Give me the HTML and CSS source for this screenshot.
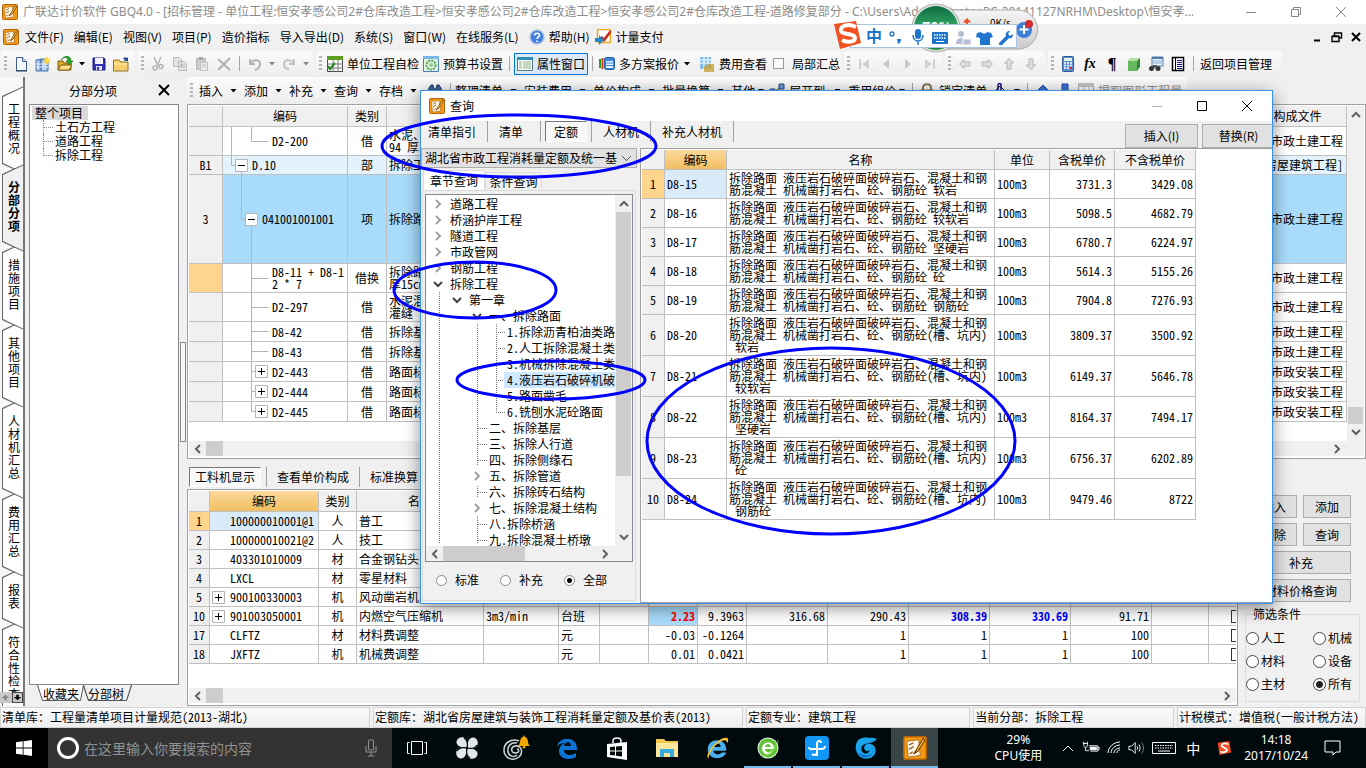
FILE: index.html
```html
<!DOCTYPE html>
<html lang="zh-CN">
<head>
<meta charset="utf-8">
<title>广联达计价软件 GBQ4.0</title>
<link rel="stylesheet" href="styles.css">
</head>
<body>
<svg class="defs" aria-hidden="true">
<symbol id="app" viewBox="0 0 16 16"><rect x=".5" y=".5" width="15" height="15" rx="1" fill="#f39a12" stroke="#b5610a"/><path d="M2.500 3.500l8-1 1 10.500-8 1z" fill="#fff8e8" stroke="#a86a20" stroke-width=".6"/><path d="M4 6l3-1.500M4 9l3-2M4.500 12l2-1.500" stroke="#8a4a10" stroke-width=".8"/><path d="M13.500 1.500L9 9l-2 3 3-2 4.500-7z" fill="#ffd34a" stroke="#7a3b05" stroke-width=".8"/></symbol>
<symbol id="dd" viewBox="0 0 6 4"><path d="M0 0h6L3 3.500z"/></symbol>
<symbol id="doc" viewBox="0 0 16 16"><path d="M3.500 1.500h6l4 4v9h-10z" fill="#f4f9ff" stroke="#3f5f8f"/><path d="M9.500 1.500v4h4" fill="#cfe2f7" stroke="#3f5f8f"/><path d="M3 15h11" stroke="#23395d"/></symbol>
<symbol id="newp" viewBox="0 0 16 16"><path d="M1 4l5-1v12H1zM6 3h7v12H6z" fill="#8fb2e0" stroke="#5277b3"/><path d="M3 5v9M8 5v9M10 5v9M1 8h12M1 11h12" stroke="#e6f0fc"/><path d="M12 0l1 3 3-1-2 2.500L16 7l-3-.5L12 9l-1-2.500L8 7l2-2.500L8 2l3 1z" fill="#ffd83b"/></symbol>
<symbol id="open" viewBox="0 0 16 16"><path d="M1 5h5l1 2h7v7H1z" fill="#dca72d" stroke="#7e5b0e"/><path d="M1 14l3-5h11l-3 5z" fill="#ffe08a" stroke="#7e5b0e"/><path d="M4 4c3-4 7-3 7 1h-2l3.500 4L16 5h-2C14-1 7-1 4 4z" fill="#28a428" stroke="#12701a" stroke-width=".6"/></symbol>
<symbol id="save" viewBox="0 0 16 16"><path d="M2 2h11l1 1v11H2z" fill="#3232b8" stroke="#1d1d7c"/><path d="M4 2h8v6H4z" fill="#f2f2fa"/><path d="M5 10h6v4H5z" fill="#dcdcf0"/><path d="M6 11h2v3H6z" fill="#3232b8"/></symbol>
<symbol id="folder" viewBox="0 0 16 16"><path d="M.5 4h6l1 2H15v9H.5z" fill="#f5cf70" stroke="#94722a"/><path d="M1 8h13" stroke="#fff0b8"/><path d="M10 3c1-2 3-2 4-1l1-1v4h-4l1-1" fill="#2b4f8e"/></symbol>
<symbol id="cut" viewBox="0 0 16 16"><path d="M4 1l4 9M11 1L7 10" stroke="#b4b4b4" stroke-width="1.500"/><circle cx="5" cy="12" r="2" fill="none" stroke="#b4b4b4" stroke-width="1.500"/><circle cx="11" cy="10.500" r="2" fill="none" stroke="#b4b4b4" stroke-width="1.500"/></symbol>
<symbol id="copy" viewBox="0 0 16 16"><path d="M1.500 1.500h6l2 2v7h-8zM6.500 5.500h6l2 2v7h-8z" fill="#e4e4e4" stroke="#bcbcbc"/><path d="M8 9h5M8 11h5" stroke="#bcbcbc"/></symbol>
<symbol id="paste" viewBox="0 0 16 16"><path d="M2.500 2.500h9v11h-9z" fill="#ccc" stroke="#b4b4b4"/><path d="M5 1h4v3H5z" fill="#aaa"/><path d="M6.500 6.500h7v8h-7z" fill="#eee" stroke="#bcbcbc"/><path d="M8 9h4M8 11h4" stroke="#bcbcbc"/></symbol>
<symbol id="del" viewBox="0 0 16 16"><path d="M2 3l12 11M14 2L2 14" stroke="#adadad" stroke-width="1.800"/></symbol>
<symbol id="undo" viewBox="0 0 16 16"><path d="M3 3v5h5" fill="none" stroke="#b4b4b4" stroke-width="2"/><path d="M3 8c3-5 10-5 10 0 0 3-2 5-5 6" fill="none" stroke="#b4b4b4" stroke-width="2"/></symbol>
<symbol id="redo" viewBox="0 0 16 16"><path d="M13 3v5H8" fill="none" stroke="#c4c4c4" stroke-width="2"/><path d="M13 8C10 3 3 3 3 8c0 3 2 5 5 5" fill="none" stroke="#c4c4c4" stroke-width="2"/></symbol>
<symbol id="check" viewBox="0 0 16 16"><path d="M.5.5h15v15H.5z" fill="#fff" stroke="#444"/><path d="M0 0h16v4H0z" fill="#5f9f20"/><path d="M6 4v12M11 4v12M0 8h16M0 12h16" stroke="#777"/><path d="M1 10l2 3 5-6" fill="none" stroke="#1e8a1e" stroke-width="2"/></symbol>
<symbol id="budget" viewBox="0 0 16 16"><path d="M.5.5h15v15H.5z" fill="#e4f4e4" stroke="#4a7fb5"/><path d="M0 0h16v3H0z" fill="#7bb6e8"/><circle cx="8" cy="9" r="4.500" fill="none" stroke="#53a553" stroke-width="2" stroke-dasharray="2 1"/><circle cx="8" cy="9" r="2" fill="#93cd93"/></symbol>
<symbol id="prop" viewBox="0 0 16 16"><path d="M.5 1.500h15v13H.5z" fill="#fff" stroke="#578"/><path d="M0 1h16v3H0z" fill="#2e8fbd"/><path d="M2 6h3M2 8h3M2 10h3M2 12h3M6 6h8M6 8h8M6 10h8M6 12h8" stroke="#88b57e"/></symbol>
<symbol id="plan" viewBox="0 0 16 16"><path d="M1 3v9" stroke="#1fa01f" stroke-width="2"/><path d="M3.500 2v11" stroke="#e03a20" stroke-width="2"/><rect x="5.500" y="1.500" width="10" height="12" rx="2" fill="#3a86d8" stroke="#1e5aa8"/><path d="M7 5h7v7H7z" fill="#e8f3ff"/><path d="M7 7h7M7 9.500h7" stroke="#3a86d8"/></symbol>
<symbol id="fee" viewBox="0 0 16 16"><rect x="1" y="1" width="11" height="12" fill="#82bbe8"/><path d="M1 4h11M1 7h11M5 1v12M9 1v12" stroke="#fff"/><path d="M5 11h10M5 13h10M5 15h10M8 9h7" stroke="#c79a2a" stroke-width="1.500"/></symbol>
<symbol id="first" viewBox="0 0 16 16"><path d="M3 3h2v10H3zM13 3v10L6 8z" fill="#d0d0d0"/></symbol>
<symbol id="prev" viewBox="0 0 16 16"><path d="M11 3v10L5 8z" fill="#c8c8c8"/></symbol>
<symbol id="left" viewBox="0 0 16 16"><path d="M2.500 8L7 3.500V6h6v4H7v2.500z" fill="#ddd" stroke="#b4b4b4"/></symbol>
<symbol id="calc" viewBox="0 0 16 16"><rect x="2.500" y=".5" width="11" height="15" rx="1" fill="#5b8fd4" stroke="#2c5593"/><path d="M4 2h8v3H4z" fill="#e6f2e6"/><path d="M4 7h8M4 9.500h8M4 12h8" stroke="#fff" stroke-width="1.500" stroke-dasharray="2 1"/><path d="M10 12h2" stroke="#d22" stroke-width="2"/></symbol>
<symbol id="cube" viewBox="0 0 16 16"><path d="M2 5l3-3h9v9l-3 4H2z" fill="#2f8a3a"/><path d="M2 5h9v10H2z" fill="#66b860"/><path d="M2 5l3-3h9l-3 3z" fill="#b6e0a5"/></symbol>
<symbol id="find" viewBox="0 0 16 16"><path d="M4 1h11v9H4z" fill="#e9f2fc" stroke="#4e78ad"/><path d="M4 2h11" stroke="#4e78ad" stroke-width="2"/><path d="M5 5h9M5 7h9" stroke="#8caad0"/><circle cx="3.500" cy="12.500" r="2.500" fill="#333"/><circle cx="10" cy="12.500" r="2.500" fill="#333"/><path d="M5 9h4v3H5z" fill="#555"/></symbol>
<symbol id="list" viewBox="0 0 16 16"><path d="M2.500 1.500h11v13h-11z" fill="#fff" stroke="#000" stroke-width="1.500"/><path d="M5.500 2v12" stroke="#000"/><path d="M7 4.500h5M7 6.500h5M7 8.500h5M7 10.500h5M7 12.500h5" stroke="#117"/></symbol>
<symbol id="bino" viewBox="0 0 16 16"><path d="M2 5l2-3h2l1 4h2l1-4h2l2 3 1 8h-5V9H7v4H1z" fill="#3d5f94" stroke="#22385e"/></symbol>
<symbol id="expand" viewBox="0 0 16 16"><path d="M1 6h5v5H1zM10 1h5v5h-5z" fill="#6d93d0" stroke="#284b85"/><path d="M6 8l5-3" stroke="#333"/></symbol>
<symbol id="lock" viewBox="0 0 16 16"><path d="M4 7V5c0-5 8-5 8 0v2" fill="none" stroke="#847454" stroke-width="2"/><rect x="2" y="7" width="12" height="8" fill="#d9b45c" stroke="#84621c"/></symbol>
<symbol id="paint" viewBox="0 0 16 16"><path d="M2 9l6-6 6 6-5 5z" fill="#eee" stroke="#113"/><path d="M6 8V2c0-2 3-2 3 0v5M13 8c3 2 2 5 1 6" fill="none" stroke="#117" stroke-width="1.500"/></symbol>
<symbol id="upb" viewBox="0 0 16 16"><path d="M8 2l6 6h-3v7H5V8H2z" fill="#3f72d2" stroke="#1c489c"/></symbol>
<symbol id="help" viewBox="0 0 16 16"><circle cx="8" cy="8" r="7" fill="#3f7fdc" stroke="#b4c6df" stroke-width="1.500"/><path d="M5.500 6.500c0-3 5-3 5 0 0 1.500-2.500 1.500-2.500 3.500M8 11.500v1.500" fill="none" stroke="#fff" stroke-width="1.600"/></symbol>
<symbol id="pay" viewBox="0 0 16 16"><rect x="2.500" y=".5" width="13" height="13" rx="1" fill="#fff" stroke="#f5a21c" stroke-width="1.500"/><path d="M6 8l3 3 7-9" fill="none" stroke="#c4261b" stroke-width="2.500"/><path d="M0 9h4V6l5 5-5 5v-3H0z" fill="#2487c8"/></symbol>
<symbol id="cl" viewBox="0 0 10 10"><path d="M7 1L3 5l4 4" fill="none" stroke="#606060" stroke-width="2"/></symbol>
<symbol id="cr" viewBox="0 0 10 10"><path d="M3 1l4 4-4 4" fill="none" stroke="currentColor" stroke-width="2"/></symbol>
<symbol id="cu" viewBox="0 0 10 10"><path d="M1 7l4-4 4 4" fill="none" stroke="currentColor" stroke-width="2"/></symbol>
<symbol id="cd" viewBox="0 0 10 10"><path d="M1 3l4 4 4-4" fill="none" stroke="currentColor" stroke-width="2"/></symbol>
<symbol id="plus" viewBox="0 0 13 13"><path d="M.5.5h12v12H.5z" fill="#fff" stroke="#b4b4b4"/><path d="M3 6.500h7M6.500 3v7" stroke="#000"/></symbol>
<symbol id="minus" viewBox="0 0 13 13"><path d="M.5.5h12v12H.5z" fill="#fff" stroke="#b4b4b4"/><path d="M3 6.500h7" stroke="#000"/></symbol>
</svg>

<header class="titlebar">
  <svg class="i"><use href="#app"/></svg>
  <h1 class="title">广联达计价软件 GBQ4.0 - [招标管理 - 单位工程:恒安孝感公司2#仓库改造工程&gt;恒安孝感公司2#仓库改造工程&gt;恒安孝感公司2#仓库改造工程-道路修复部分 - C:\Users\Administrator.PC-20141127NRHM\Desktop\恒安孝...</h1>
  <div class="wincontrols">
    <button aria-label="最小化"><svg viewBox="0 0 12 12"><path d="M1 6.500h10"/></svg></button>
    <button aria-label="还原"><svg viewBox="0 0 12 12"><path d="M1.500 3.500h7v7h-7zM3.500 3V1.500h7v7H9"/></svg></button>
    <button aria-label="关闭"><svg viewBox="0 0 12 12"><path d="M1 1l10 10M11 1L1 11"/></svg></button>
  </div>
</header>

<nav class="menubar">
  <svg class="i"><use href="#app"/></svg>
  <button>文件(F)</button><button>编辑(E)</button><button>视图(V)</button><button>项目(P)</button><button>造价指标</button><button>导入导出(D)</button><button>系统(S)</button><button>窗口(W)</button><button>在线服务(L)</button>
  <button class="withicon"><svg class="i"><use href="#help"/></svg>帮助(H)</button>
  <button class="withicon pay"><svg class="i"><use href="#pay"/></svg>计量支付</button>
  <div class="mdi">
    <button aria-label="最小化子窗口"><svg viewBox="0 0 12 12"><path d="M2 9.500h6" stroke-width="2"/></svg></button>
    <button aria-label="还原子窗口"><svg viewBox="0 0 12 12"><path d="M1 5.500h7v5H1zM3.500 5V2h7v5H8.500M1 5h7M3 2h8" stroke-width="1.400"/></svg></button>
    <button aria-label="关闭子窗口"><svg viewBox="0 0 12 12"><path d="M2 2l8 8M10 2l-8 8" stroke-width="2"/></svg></button>
  </div>
</nav>

<div class="toolbar">
  <div class="grp g1"><i class="grip"></i><button class="ib" aria-label="新建"><svg class="i"><use href="#doc"/></svg></button><button class="ib" aria-label="新建项目"><svg class="i"><use href="#newp"/></svg></button><button class="ib" aria-label="打开"><svg class="i"><use href="#open"/></svg></button><svg class="dd"><use href="#dd"/></svg><button class="ib" aria-label="保存"><svg class="i"><use href="#save"/></svg></button><button class="ib" aria-label="文件夹"><svg class="i"><use href="#folder"/></svg></button></div>
  <div class="grp g2"><i class="grip"></i><button class="ib" aria-label="剪切"><svg class="i"><use href="#cut"/></svg></button><button class="ib" aria-label="复制"><svg class="i"><use href="#copy"/></svg></button><button class="ib" aria-label="粘贴"><svg class="i"><use href="#paste"/></svg></button><button class="ib" aria-label="删除"><svg class="i"><use href="#del"/></svg></button><i class="sep"></i><button class="ib" aria-label="撤销"><svg class="i"><use href="#undo"/></svg></button><svg class="dd off"><use href="#dd"/></svg><button class="ib" aria-label="重做"><svg class="i"><use href="#redo"/></svg></button><svg class="dd off"><use href="#dd"/></svg></div>
  <div class="grp g3"><i class="grip"></i><button class="tb"><svg class="i"><use href="#check"/></svg>单位工程自检</button><button class="tb"><svg class="i"><use href="#budget"/></svg>预算书设置</button><i class="sep"></i><button class="tb on"><svg class="i"><use href="#prop"/></svg>属性窗口</button><i class="sep"></i><button class="tb"><svg class="i"><use href="#plan"/></svg>多方案报价</button><svg class="dd"><use href="#dd"/></svg><button class="tb fee"><svg class="i"><use href="#fee"/></svg>费用查看</button><label class="chk"><input type="checkbox">局部汇总</label></div>
  <div class="grp g4"><i class="grip"></i><button class="ib" aria-label="第一条"><svg class="i"><use href="#first"/></svg></button><button class="ib" aria-label="上一条"><svg class="i"><use href="#prev"/></svg></button><button class="ib flip" aria-label="下一条"><svg class="i"><use href="#prev"/></svg></button><button class="ib flip" aria-label="最后一条"><svg class="i"><use href="#first"/></svg></button></div>
  <div class="grp g5"><i class="grip"></i><button class="ib" aria-label="升级"><svg class="i"><use href="#left"/></svg></button><button class="ib flip" aria-label="降级"><svg class="i"><use href="#left"/></svg></button><button class="ib up" aria-label="上移"><svg class="i"><use href="#left"/></svg></button><button class="ib down" aria-label="下移"><svg class="i"><use href="#left"/></svg></button></div>
  <div class="grp g6"><i class="grip"></i><button class="ib" aria-label="计算器"><svg class="i"><use href="#calc"/></svg></button><button class="ib fx">fx</button><button class="ib para">¶</button><button class="ib" aria-label="图元"><svg class="i"><use href="#cube"/></svg></button><button class="ib" aria-label="查找"><svg class="i"><use href="#find"/></svg></button><button class="ib" aria-label="列表"><svg class="i"><use href="#list"/></svg></button><i class="sep"></i><button class="tb">返回项目管理</button></div>
</div>

<main class="work">
  <nav class="rail">
    <button class="vt z8"><span>工程概况</span></button>
    <button class="vt cur"><span>分部分项</span></button>
    <button class="vt z6"><span>措施项目</span></button>
    <button class="vt z5"><span>其他项目</span></button>
    <button class="vt z4"><span>人材机汇总</span></button>
    <button class="vt z3"><span>费用汇总</span></button>
    <button class="vt z2"><span>报表</span></button>
    <button class="vt z1"><span>符合性检查</span></button>
    <div class="railnav"><button aria-label="向上" disabled><svg viewBox="0 0 11 11"><path d="M5.500 2L10 6H7v3H4V6H1z"/></svg></button><button aria-label="向下"><svg viewBox="0 0 11 11"><path d="M5.500 9L10 5H7V2H4v3H1z"/></svg></button></div>
  </nav>

  <aside class="side">
    <div class="sidehead"><h2>分部分项</h2><button aria-label="关闭面板"><svg viewBox="0 0 12 12"><path d="M1 1l10 10M11 1L1 11" stroke="#000" stroke-width="2"/></svg></button></div>
    <div class="sidetree">
      <span class="root">整个项目</span>
      <ul><li>土石方工程</li><li>道路工程</li><li>拆除工程</li></ul>
    </div>
    <div class="sidetabs">
      <svg class="shape" viewBox="0 0 150 20"><path d="M8.500 0l5 15.500h38l3-15.500M54.500 1l5 14.500h38L102.500 0z" fill="#fff" stroke="#555"/><path d="M54.500 0l5 15.500h38L102.500 0" fill="#f0f0f0" stroke="#555"/></svg>
      <button>收藏夹</button><button>分部树</button>
    </div>
  </aside>
  <div class="splitter"><i></i></div>

  <section class="right">
    <div class="toolbar2">
      <i class="grip"></i>
      <button>插入</button><svg class="dd w"><use href="#dd"/></svg><button>添加</button><svg class="dd w"><use href="#dd"/></svg><button>补充</button><svg class="dd w"><use href="#dd"/></svg><button>查询</button><svg class="dd w"><use href="#dd"/></svg><button>存档</button><svg class="dd w"><use href="#dd"/></svg><button class="ib" aria-label="查找"><svg class="i"><use href="#bino"/></svg></button><i class="sep"></i>
      <button>整理清单</button><svg class="dd w"><use href="#dd"/></svg><button>安装费用</button><svg class="dd w"><use href="#dd"/></svg><button>单价构成</button><svg class="dd w"><use href="#dd"/></svg><button>批量换算</button><svg class="dd w"><use href="#dd"/></svg><button>其他</button><svg class="dd"><use href="#dd"/></svg><button class="tb"><svg class="i"><use href="#expand"/></svg>展开到</button><svg class="dd w"><use href="#dd"/></svg><button>重用组价</button><svg class="dd"><use href="#dd"/></svg><i class="sep"></i><button class="tb"><svg class="i"><use href="#lock"/></svg>锁定清单</button><button class="ib" aria-label="颜色"><svg class="i"><use href="#paint"/></svg></button><svg class="dd"><use href="#dd"/></svg><i class="sep"></i><button class="ib" aria-label="上移"><svg class="i"><use href="#upb"/></svg></button><button class="ib" aria-label="下移"><svg class="i rot"><use href="#upb"/></svg></button><button class="tb" disabled><svg class="i gray"><use href="#check"/></svg>提取图形工程量</button>
    </div>

    <div class="gridbox upper">
      <div class="scrollarea">
        <table class="grid">
          <colgroup><col class="c34"><col class="c125"><col class="c39"><col><col class="c98"></colgroup>
          <thead><tr class="h21"><th></th><th>编码</th><th>类别</th><th></th><th>构成文件</th></tr></thead>
          <tbody>
            <tr class="h29"><th></th><td class="t3"><svg class="ln"><path d="M8.500 0v29M28.500 0v14.500h17"/></svg>D2-200</td><td class="c">借</td><td>水泥、<br>94 厚</td><td class="r">市政土建工程</td></tr>
            <tr class="h19 sec"><th>B1</th><td class="t1"><svg class="ln"><path d="M8.500 0v9.500h4M18.500 15v5"/><use href="#minus" x="12" y="3" width="13" height="13"/></svg>D.10</td><td class="c">部</td><td>拆除工</td><td class="r">[房屋建筑工程]</td></tr>
            <tr class="h89 selrow"><th>3</th><td class="t2"><svg class="ln"><path d="M18.500 0v44.500h4M28.500 50v39"/><use href="#minus" x="22" y="38" width="13" height="13"/></svg>041001001001</td><td class="c">项</td><td>拆除路</td><td class="r">市政土建工程</td></tr>
            <tr class="h29"><th class="org"></th><td class="t3"><svg class="ln"><path d="M28.500 0v29M28.500 14.500h17"/></svg>D8-11 + D8-1<br>2 * 7</td><td class="c">借换</td><td>拆除路<br>厚15cm</td><td class="r">市政土建工程</td></tr>
            <tr class="h29"><th></th><td class="t3"><svg class="ln"><path d="M28.500 0v29M28.500 14.500h17"/></svg>D2-297</td><td class="c">借</td><td>水泥混<br>灌缝</td><td class="r">市政土建工程</td></tr>
            <tr class="h20"><th></th><td class="t3"><svg class="ln"><path d="M28.500 0v20M28.500 9.500h17"/></svg>D8-42</td><td class="c">借</td><td>拆除基</td><td class="r">市政土建工程</td></tr>
            <tr class="h20"><th></th><td class="t3"><svg class="ln"><path d="M28.500 0v20M28.500 9.500h17"/></svg>D8-43</td><td class="c">借</td><td>拆除基</td><td class="r">市政土建工程</td></tr>
            <tr class="h20"><th></th><td class="t3"><svg class="ln"><path d="M28.500 0v20M28.500 9.500h4"/><use href="#plus" x="32" y="3" width="13" height="13"/></svg>D2-443</td><td class="c">借</td><td>路面标</td><td class="r">市政安装工程</td></tr>
            <tr class="h20"><th></th><td class="t3"><svg class="ln"><path d="M28.500 0v20M28.500 9.500h4"/><use href="#plus" x="32" y="3" width="13" height="13"/></svg>D2-444</td><td class="c">借</td><td>路面标</td><td class="r">市政安装工程</td></tr>
            <tr class="h20"><th></th><td class="t3"><svg class="ln"><path d="M28.500 0v9.500h4"/><use href="#plus" x="32" y="3" width="13" height="13"/></svg>D2-445</td><td class="c">借</td><td>路面标</td><td class="r">市政安装工程</td></tr>
          </tbody>
        </table>
        <div class="vbar"><svg><use href="#cu"/></svg><i class="space"></i><i class="thumb17"></i><svg><use href="#cd"/></svg></div>
      </div>
      <div class="hbar"><svg><use href="#cl"/></svg><i class="thumb"></i><i class="space"></i><svg class="end2"><use href="#cr"/></svg></div>
    </div>

    <div class="midtabs"><button class="pressed">工料机显示</button><button>查看单价构成</button><button>标准换算</button></div>

    <div class="lower">
      <div class="gridbox">
        <div class="scrollarea">
          <table class="grid low">
            <colgroup><col class="c21"><col class="c109"><col class="c38"><col class="c127"><col class="c75"><col class="c41"><col class="c49"><col class="c49"><col class="c49"><col class="c81"><col class="c81"><col class="c81"><col class="c81"><col class="c81"><col class="c57"><col class="c60"></colgroup>
            <thead><tr class="h21"><th></th><th class="orghead">编码</th><th>类别</th><th>名称</th><th></th><th></th><th></th><th></th><th></th><th></th><th></th><th></th><th></th><th></th><th></th><th></th></tr></thead>
            <tbody>
              <tr class="h19"><th class="org">1</th><td class="code cell">100000010001@1</td><td class="c">人</td><td>普工</td><td></td><td></td><td></td><td></td><td></td><td></td><td></td><td></td><td></td><td></td><td></td><td></td></tr>
              <tr class="h19"><th>2</th><td class="code">100000010021@2</td><td class="c">人</td><td>技工</td><td></td><td></td><td></td><td></td><td></td><td></td><td></td><td></td><td></td><td></td><td></td><td></td></tr>
              <tr class="h19"><th>3</th><td class="code">403301010009</td><td class="c">材</td><td>合金钢钻头</td><td></td><td></td><td></td><td></td><td></td><td></td><td></td><td></td><td></td><td></td><td></td><td></td></tr>
              <tr class="h19"><th>4</th><td class="code">LXCL</td><td class="c">材</td><td>零星材料</td><td></td><td></td><td></td><td></td><td></td><td></td><td></td><td></td><td></td><td></td><td></td><td></td></tr>
              <tr class="h19"><th>5</th><td class="code"><svg class="ln"><use href="#plus" x="2" y="3" width="13" height="13"/></svg>900100330003</td><td class="c">机</td><td>风动凿岩机</td><td></td><td></td><td></td><td></td><td></td><td></td><td></td><td></td><td></td><td></td><td></td><td></td></tr>
              <tr class="h19"><th>10</th><td class="code"><svg class="ln"><use href="#plus" x="2" y="3" width="13" height="13"/></svg>901003050001</td><td class="c">机</td><td>内燃空气压缩机</td><td>3m3/min</td><td>台班</td><td></td><td class="r red">2.23</td><td class="r">9.3963</td><td class="r">316.68</td><td class="r">290.43</td><td class="r blue">308.39</td><td class="r blue">330.69</td><td class="r">91.71</td><td></td><td class="k"><input type="checkbox" aria-label="暂估 10"></td></tr>
              <tr class="h19"><th>17</th><td class="code">CLFTZ</td><td class="c">材</td><td>材料费调整</td><td></td><td>元</td><td></td><td class="r">-0.03</td><td class="r">-0.1264</td><td></td><td class="r">1</td><td class="r">1</td><td class="r">1</td><td class="r">100</td><td></td><td class="k"><input type="checkbox" aria-label="暂估 17"></td></tr>
              <tr class="h19"><th>18</th><td class="code">JXFTZ</td><td class="c">机</td><td>机械费调整</td><td></td><td>元</td><td></td><td class="r">0.01</td><td class="r">0.0421</td><td></td><td class="r">1</td><td class="r">1</td><td class="r">1</td><td class="r">100</td><td></td><td class="k"><input type="checkbox" aria-label="暂估 18"></td></tr>
            </tbody>
          </table>
        </div>
        <div class="hbar"><svg><use href="#cl"/></svg><i class="thumb"></i><i class="space"></i><svg><use href="#cr"/></svg></div>
      </div>
      <div class="actions">
        <div class="btns"><button>插入</button><button>添加</button><button>删除</button><button>查询</button><button class="wide">补充</button><button class="wide">材料价格查询</button></div>
        <fieldset><legend>筛选条件</legend>
          <label><input type="radio" name="f">人工</label><label><input type="radio" name="f">机械</label>
          <label><input type="radio" name="f">材料</label><label><input type="radio" name="f">设备</label>
          <label><input type="radio" name="f">主材</label><label><input type="radio" name="f" checked>所有</label>
        </fieldset>
      </div>
    </div>
  </section>
</main>

<footer class="status"><span class="s1">清单库：工程量清单项目计量规范(2013-湖北)</span><span class="s1">定额库：湖北省房屋建筑与装饰工程消耗量定额及基价表(2013)</span><span class="s3">定额专业：建筑工程</span><span class="s4">当前分部：拆除工程</span><span class="s5">计税模式：增值税(一般计税方法)</span></footer>

<div class="taskbar">
  <button class="start" aria-label="开始"><svg viewBox="0 0 16 16"><path d="M0 2.200L6.700 1.300v6.300H0zM7.500 1.200L16 0v7.600H7.500zM0 8.400h6.700v6.300L0 13.800zM7.500 8.400H16V16l-8.500-1.200z" fill="#fff"/></svg></button>
  <div class="search"><i class="ring"></i><input type="text" placeholder="在这里输入你要搜索的内容" aria-label="搜索"><svg class="mic" viewBox="0 0 12 18"><rect x="3.500" y="1" width="5" height="10" rx="1"/><path d="M1 7v6h10V7M6 13v4M3 17h6"/></svg></div>
  <button class="tk" aria-label="任务视图"><svg viewBox="0 0 24 24"><path d="M6.500 5.500h11v13h-11zM4.500 6.500H2.500v11h2M19.500 6.500h2v11h-2" fill="none" stroke="#fff"/></svg></button>
  <button class="tk" aria-label="应用一"><svg viewBox="0 0 24 24"><g fill="#e2e8e8"><path id="petal" d="M11.500 11.500C5 12 1 9 1.500 5.500S6 .5 9 1.500c3 1.500 4.500 5 2.500 10z"/><use href="#petal" transform="rotate(90 12 12)"/><use href="#petal" transform="rotate(180 12 12)"/><use href="#petal" transform="rotate(270 12 12)"/></g><path d="M9 2c3 2 4 6 3 10M22 9c-2 3-6 4-10 3M15 22c-3-2-4-6-3-10M2 15c2-3 6-4 10-3" fill="none" stroke="#000a0d" stroke-width="1.200"/></svg></button>
  <button class="tk" aria-label="应用二"><svg class="big" viewBox="0 0 30 26"><g fill="none" stroke="#cfd6d6" stroke-width="1.500"><path d="M17 6C9 3 2 8 2 15c0 8 9 12 15 7 5-5 2-12-4-11-5 1-4 8 1 7 4-1 3-4 1-4"/><path d="M15 8c-6-1-10 3-9 9 1 4 6 6 9 3"/></g><path d="M16 11c3-2 1-8 5-9l1-2 1 2c4 1 2 7 5 9z" fill="#f0a800"/><circle cx="22" cy="12" r="1.500" fill="#f0a800"/></svg></button>
  <button class="tk" aria-label="Edge"><svg viewBox="0 0 24 24"><path d="M2 11C3 1 21-1 22 12v2H9c0 6 8 6 12 3v4C14 25 4 23 4 15c0-4 3-7 6-8-5 0-7 2-8 4zM9 10h7c0-5-6-5-7 0z" fill="#0a74d6"/></svg></button>
  <button class="tk" aria-label="应用商店"><svg viewBox="0 0 24 24"><path d="M8 7V5c0-4 8-4 8 0v2" fill="none" stroke="#fff" stroke-width="1.500"/><path d="M2 8l20-2v18L2 21z" fill="#fff"/><path d="M5 11l5-.5v4H5zM11 10.500l6-.5v4.500h-6zM5 15.500h5v4l-5-.5zM11 15.500h6v5l-6-.7z" fill="#000a0d"/></svg></button>
  <button class="tk" aria-label="资源管理器"><svg viewBox="0 0 24 24"><path d="M1 3h8l2 2h12v16H1z" fill="#f3c94f"/><path d="M1 7h22v14H1z" fill="#fde59a"/><path d="M5 13h14v8h-4v-4h-6v4H5z" fill="#37a9e1"/></svg></button>
  <button class="tk" aria-label="IE"><svg viewBox="0 0 26 26"><path d="M3 14C3 2 22 1 23 14v2H9c1 5 7 5 9 2h5c-3 9-20 8-20-4zM9 12h8c0-5-7-5-8 0z" fill="#48b0ee"/><path d="M4 24C-2 22 14 0 24 2c2 2 1 4 0 6 0-10-19 4-20 16z" fill="#f7c431"/></svg></button>
  <button class="tk run" aria-label="360浏览器"><svg viewBox="0 0 24 24"><circle cx="12" cy="12" r="10.500" fill="#e8f6e0"/><circle cx="12" cy="12" r="9.500" fill="#5fc238"/><path d="M6 12c1-8 13-7 12 1H9c0 4 5 4 8 1-1 6-11 6-11-2zM9 11h6c-1-4-5-4-6 0z" fill="#fff"/><path d="M2 20C8 23 20 12 22 3c3 9-12 21-20 17z" fill="#8bd85c" opacity=".6"/></svg></button>
  <button class="tk run" aria-label="应用三"><svg viewBox="0 0 24 24"><rect width="24" height="24" rx="4" fill="#1296f5"/><path d="M12 20V8c0-4 4-4 4-1M4 11c0 3 3 2 5 2h6c3 0 5 0 5-3M12 16c0 3-3 4-5 2" fill="none" stroke="#fff" stroke-width="2"/></svg></button>
  <button class="tk run" aria-label="广联达"><svg viewBox="0 0 26 26"><path d="M25 3c-4-1-6-1-9-1C7 0 1 5 2 14c1 9 10 13 17 9 5-3 6-9 2-13-3-3-10-2-10 3 0 3 4 5 6 2-1 6-9 5-9-1 0-8 12-4 17-11z" fill="#1aa4ee"/><path d="M3 16c2 6 9 9 15 5 4-3 4-7 2-9 2 6-1 9-7 9-5 0-8-2-10-5z" fill="#0b62bd"/></svg></button>
  <button class="tk run active" aria-label="计价软件"><svg viewBox="0 0 16 16"><use href="#app"/></svg></button>
  <div class="tray">
    <span class="cpu">29%<br>CPU使用</span>
    <svg class="t16" viewBox="0 0 16 16"><path d="M3 11l5-5 5 5"/></svg>
    <svg class="t20" viewBox="0 0 20 16"><path d="M7.500 5.500h10v6h-8M17.500 7h1.500v3h-1.500M1 3h5M2 1v4c0 3 4 3 4 0V1M4 7v4h4"/><path d="M9 7h7v3H9z" fill="#fff"/></svg>
    <svg class="t16" viewBox="0 0 16 16"><path d="M2 13C2 7 8 2 14 2M5 13c0-4 4-8 9-8M8 13c0-3 3-5 6-5M11 13c0-2 1-3 3-3"/></svg>
    <svg class="t20" viewBox="0 0 20 16"><path d="M1 6h3l4-4v12l-4-4H1zM10 6c1 1 1 3 0 4M12 4c2 2 2 6 0 8"/><path d="M15 2c3 3 3 9 0 12" opacity=".5"/></svg>
    <svg class="t28" viewBox="0 0 24 14"><path d="M.5 1.500h23v11H.5z"/><path d="M3 4.500h18M3 7h18" stroke-dasharray="1.500 1"/><path d="M6 10h12"/></svg>
    <span class="ime">中</span>
    <svg class="sg" viewBox="0 0 18 18"><path d="M2 3l13-2 2 13-13 3z" fill="#f04b1d"/><path d="M14 5C8 2 4 6 8 8s6 3 3 5-6 0-6 0" fill="none" stroke="#fff" stroke-width="2"/></svg>
    <span class="clock">14:18<br>2017/10/24</span>
    <svg class="note" viewBox="0 0 18 18"><path d="M1 2h15v11h-4l-3 3v-3H1z"/></svg>
  </div>
</div>

<section class="dialog" role="dialog" aria-label="查询">
  <div class="dtitle"><svg class="i"><use href="#app"/></svg><h2>查询</h2>
    <div class="wincontrols dark"><button aria-label="最小化" disabled><svg viewBox="0 0 12 12"><path d="M1 6.500h10" opacity=".3"/></svg></button><button aria-label="最大化"><svg viewBox="0 0 12 12"><path d="M1.500 1.500h9v9h-9z"/></svg></button><button aria-label="关闭"><svg viewBox="0 0 12 12"><path d="M1 1l10 10M11 1L1 11"/></svg></button></div>
  </div>
  <div class="dtabs"><button>清单指引</button><button>清单</button><button class="pressed">定额</button><button>人材机</button><button>补充人材机</button>
    <div class="dbtns"><button>插入(I)</button><button>替换(R)</button></div>
  </div>
  <div class="dbody">
    <div class="dleft">
      <select aria-label="定额库"><option>湖北省市政工程消耗量定额及统一基</option></select>
      <div class="subtabs"><button class="cur">章节查询</button><button>条件查询</button></div>
      <div class="page">
        <div class="dtree">
          <div class="dview">
            <ul>
              <li class="l0"><svg><use href="#cr"/></svg>道路工程</li>
              <li class="l0"><svg><use href="#cr"/></svg>桥涵护岸工程</li>
              <li class="l0"><svg><use href="#cr"/></svg>隧道工程</li>
              <li class="l0"><svg><use href="#cr"/></svg>市政管网</li>
              <li class="l0"><svg><use href="#cr"/></svg>钢筋工程</li>
              <li class="l0 o"><svg><use href="#cd"/></svg>拆除工程</li>
              <li class="l1 o"><svg><use href="#cd"/></svg>第一章</li>
              <li class="l2 o"><svg><use href="#cd"/></svg>一、拆除路面</li>
              <li class="l3"><span>1.拆除沥青柏油类路</span></li>
              <li class="l3"><span>2.人工拆除混凝土类</span></li>
              <li class="l3"><span>3.机械拆除混凝土类</span></li>
              <li class="l3"><span class="hl">4.液压岩石破碎机破</span></li>
              <li class="l3"><span>5.路面凿毛</span></li>
              <li class="l3"><span>6.铣刨水泥砼路面</span></li>
              <li class="l2"><i></i>二、拆除基层</li>
              <li class="l2"><i></i>三、拆除人行道</li>
              <li class="l2"><i></i>四、拆除侧缘石</li>
              <li class="l2"><svg><use href="#cr"/></svg>五、拆除管道</li>
              <li class="l2"><i></i>六、拆除砖石结构</li>
              <li class="l2"><svg><use href="#cr"/></svg>七、拆除混凝土结构</li>
              <li class="l2"><i></i>八.拆除桥涵</li>
              <li class="l2"><i></i>九.拆除混凝土桥墩</li>
            </ul>
            <svg class="dots" viewBox="0 0 189 348"><path d="M13.500 97v251M51.500 129v142M51.500 291v12M51.500 321v27M70.500 129v88M70 137.500h10M70 153.500h10M70 169.500h10M70 185.500h8M70 201.500h10M70 217.500h10M52 233.500h9M52 249.500h9M52 265.500h9M52 297.500h9M52 329.500h9M52 345.500h9" fill="none" stroke="#777" stroke-dasharray="1 1"/></svg>
            <div class="vbar"><svg><use href="#cu"/></svg><i class="dthumb"></i><i class="space"></i><svg><use href="#cd"/></svg></div>
          </div>
          <div class="hbar"><svg><use href="#cl"/></svg><i class="thumb82"></i><i class="space"></i><svg class="end2"><use href="#cr"/></svg></div>
        </div>
        <div class="dradios"><label><input type="radio" name="d">标准</label><label><input type="radio" name="d">补充</label><label><input type="radio" name="d" checked>全部</label></div>
      </div>
    </div>
    <div class="dright">
      <table class="grid dg">
        <colgroup><col class="c22"><col class="c62"><col class="c268"><col class="c55"><col class="c65"><col class="c81"></colgroup>
        <thead><tr class="h20"><th></th><th class="orghead">编码</th><th>名称</th><th>单位</th><th>含税单价</th><th>不含税单价</th></tr></thead>
        <tbody>
          <tr class="h29"><th class="org">1</th><td class="cell">D8-15</td><td>拆除路面 液压岩石破碎面破碎岩石、混凝土和钢<br>筋混凝土 机械凿打岩石、砼、钢筋砼 软岩</td><td>100m3</td><td class="r">3731.3</td><td class="r">3429.08</td></tr>
          <tr class="h29"><th>2</th><td>D8-16</td><td>拆除路面 液压岩石破碎面破碎岩石、混凝土和钢<br>筋混凝土 机械凿打岩石、砼、钢筋砼 较软岩</td><td>100m3</td><td class="r">5098.5</td><td class="r">4682.79</td></tr>
          <tr class="h29"><th>3</th><td>D8-17</td><td>拆除路面 液压岩石破碎面破碎岩石、混凝土和钢<br>筋混凝土 机械凿打岩石、砼、钢筋砼 坚硬岩</td><td>100m3</td><td class="r">6780.7</td><td class="r">6224.97</td></tr>
          <tr class="h29"><th>4</th><td>D8-18</td><td>拆除路面 液压岩石破碎面破碎岩石、混凝土和钢<br>筋混凝土 机械凿打岩石、砼、钢筋砼 砼</td><td>100m3</td><td class="r">5614.3</td><td class="r">5155.26</td></tr>
          <tr class="h29"><th>5</th><td>D8-19</td><td>拆除路面 液压岩石破碎面破碎岩石、混凝土和钢<br>筋混凝土 机械凿打岩石、砼、钢筋砼 钢筋砼</td><td>100m3</td><td class="r">7904.8</td><td class="r">7276.93</td></tr>
          <tr class="h41"><th>6</th><td>D8-20</td><td>拆除路面 液压岩石破碎面破碎岩石、混凝土和钢<br>筋混凝土 机械凿打岩石、砼、钢筋砼(槽、坑内)<br>&nbsp;软岩</td><td>100m3</td><td class="r">3809.37</td><td class="r">3500.92</td></tr>
          <tr class="h41"><th>7</th><td>D8-21</td><td>拆除路面 液压岩石破碎面破碎岩石、混凝土和钢<br>筋混凝土 机械凿打岩石、砼、钢筋砼(槽、坑内)<br>&nbsp;较软岩</td><td>100m3</td><td class="r">6149.37</td><td class="r">5646.78</td></tr>
          <tr class="h41"><th>8</th><td>D8-22</td><td>拆除路面 液压岩石破碎面破碎岩石、混凝土和钢<br>筋混凝土 机械凿打岩石、砼、钢筋砼(槽、坑内)<br>&nbsp;坚硬岩</td><td>100m3</td><td class="r">8164.37</td><td class="r">7494.17</td></tr>
          <tr class="h41"><th>9</th><td>D8-23</td><td>拆除路面 液压岩石破碎面破碎岩石、混凝土和钢<br>筋混凝土 机械凿打岩石、砼、钢筋砼(槽、坑内)<br>&nbsp;砼</td><td>100m3</td><td class="r">6756.37</td><td class="r">6202.89</td></tr>
          <tr class="h41"><th>10</th><td>D8-24</td><td>拆除路面 液压岩石破碎面破碎岩石、混凝土和钢<br>筋混凝土 机械凿打岩石、砼、钢筋砼(槽、坑内)<br>&nbsp;钢筋砼</td><td>100m3</td><td class="r">9479.46</td><td class="r">8722</td></tr>
        </tbody>
      </table>
    </div>
  </div>
</section>

<svg class="marks" viewBox="0 0 700 450" aria-hidden="true"><g fill="none" stroke="#0000ff" stroke-width="3"><ellipse cx="169" cy="46" rx="137" ry="31"/><ellipse cx="125" cy="190" rx="81" ry="28"/><ellipse cx="201" cy="280" rx="94" ry="19"/><ellipse cx="481" cy="341" rx="184" ry="93"/></g></svg>

<svg class="ball" viewBox="0 0 210 56" aria-hidden="true">
  <defs><linearGradient id="gg" x1="0" y1="0" x2="0" y2="1"><stop offset="0" stop-color="#0f6d43"/><stop offset=".4" stop-color="#2b9a5c"/><stop offset=".45" stop-color="#4fd45f"/><stop offset="1" stop-color="#1f8a3c"/></linearGradient><linearGradient id="pg" x1="0" y1="0" x2="0" y2="1"><stop offset="0" stop-color="#f6f6f6"/><stop offset="1" stop-color="#c9c9c9"/></linearGradient></defs>
  <path d="M104 7h84a19 19 0 0 1 0 39h-84z" fill="url(#pg)" stroke="#aaa"/>
  <circle cx="106" cy="25" r="24" fill="#dfe6e2" stroke="#aaa"/><circle cx="106" cy="25" r="22" fill="url(#gg)"/>
  <text x="92" y="30" font-size="14" fill="#fff" font-weight="bold">70%</text>
  <path d="M137 25v-7M134 19.500l3-3 3 3" stroke="#e9512b" stroke-width="2" fill="none"/><text x="160" y="24" font-size="10">0K/s</text>
  <circle cx="194" cy="27" r="8" fill="#3e7edb"/><path d="M194 22v9M189.500 26.500h9" stroke="#fff" stroke-width="2"/><circle cx="199" cy="21" r="4" fill="#d62b2b"/>
  <rect x="20.500" y="21.500" width="166" height="23" fill="#fff" stroke="#a9c4de"/>
  <path d="M4 21l22-3 5 22-21 6z" fill="#f1501f"/><path d="M26 24c-8-4-16-1-15 4 1 4 14 2 14 7 0 4-8 5-13 2" fill="none" stroke="#fff" stroke-width="4"/>
  <text x="36" y="39" font-size="16" font-weight="bold" fill="#1f74cb">中</text>
  <g fill="#1f74cb"><circle cx="62" cy="31" r="2" fill="none" stroke="#1f74cb" stroke-width="1.300"/><path d="M67 36h4c0 3-1 4-3 5z"/><rect x="85" y="26" width="6" height="10" rx="3"/><path d="M83 32c0 8 10 8 10 0M88 38v4" fill="none" stroke="#1f74cb" stroke-width="1.500"/><rect x="102" y="29" width="16" height="12" rx="1"/><path d="M104 32h12M104 35h12" stroke="#fff" stroke-width="1.300" stroke-dasharray="1.500 1"/><path d="M106 38.500h8" stroke="#fff"/><path d="M147 30l4-1c1 2 5 2 6 0l4 1 2 4-3 1v7h-10v-7l-4-1z"/><path d="M169 40l7-7c-1-3 1-5 4-5l-2 3 2 2 3-2c0 4-2 5-4 4l-7 7c-2 1-4-1-3-2z"/></g>
  <g fill="#b5bfd2"><circle cx="131" cy="31" r="3"/><path d="M126 41c0-8 10-8 10 0z"/><rect x="133" y="36" width="8" height="6" stroke="#fff"/></g>
</svg>
</body>
</html>
```
FILE: styles.css
```css
* { box-sizing: border-box; }
html, body { margin: 0; height: 100%; }
body {
  --song: "Noto Sans Mono CJK SC", "Noto Sans CJK SC", monospace;
  --ui: "Noto Sans CJK SC", sans-serif;
  display: flex; flex-direction: column; overflow: hidden; position: relative;
  background: #f0f0f0; color: #000; font: 12px/16px var(--ui);
}
button, input, select { font: inherit; color: inherit; }
button { border: 0; background: none; padding: 0; margin: 0; white-space: nowrap; }
h1, h2, ul { margin: 0; padding: 0; font-size: 12px; font-weight: normal; list-style: none; }
svg { flex: none; }
i { flex: none; display: block; }
.defs { position: absolute; width: 0; height: 0; }
.i { width: 16px; height: 16px; }

.titlebar { height: 24px; flex: none; display: flex; align-items: center; background: #fff; color: #8c8c8c; padding-left: 2px; }
.title { margin-left: 5px; white-space: nowrap; flex: 1; overflow: hidden; font-family: "Noto Sans", "Noto Sans CJK SC", sans-serif; }
.wincontrols { display: flex; margin-left: auto; padding-right: 3px; }
.wincontrols button { width: 45px; height: 22px; display: flex; align-items: center; justify-content: center; }
.wincontrols svg { width: 12px; height: 12px; fill: none; stroke: #888; }
.wincontrols.dark svg { stroke: #000; }

.menubar { height: 26px; flex: none; display: flex; align-items: center; gap: 10px; padding-left: 3px; }
.menubar > .i { margin-right: -4px; }
.withicon { display: flex; align-items: center; gap: 4px; }
.withicon.pay { margin-left: -4px; }
.mdi { display: flex; gap: 7px; margin-left: auto; padding-right: 4px; }
.mdi svg { width: 12px; height: 12px; display: block; fill: none; stroke: #000; }

.toolbar { height: 27px; flex: none; display: flex; align-items: center; padding-left: 1px; overflow: hidden; }
.grp { height: 26px; flex: none; display: flex; align-items: center; background: linear-gradient(#fbfbfb, #ededed); border-radius: 3px; margin-right: 3px; }
.g1 { width: 134px; } .g2 { width: 175px; } .g3 { width: 525px; } .g4 { width: 98px; } .g5 { width: 100px; } .g6 { width: 234px; }
.grip { width: 3px; height: 15px; margin: 0 3px; background: repeating-linear-gradient(#b4b4b4 0 2px, transparent 2px 4px); }
.ib { width: 22px; height: 22px; flex: none; display: flex; align-items: center; justify-content: center; }
.sep { width: 1px; height: 15px; background: #a8a8a8; margin: 0 4px; }
.dd { width: 12px; height: 4px; }
.dd.w { width: 21px; }
.dd.off { fill: #888; }
.tb { display: flex; align-items: center; gap: 4px; flex: none; height: 22px; padding: 0 2px; }
.tb.on { background: #d9e9f8; border: 1px solid #0078d7; }
.fee { margin-left: 4px; }
.chk { display: flex; align-items: center; gap: 8px; }
.chk input { appearance: none; width: 11px; height: 11px; margin: 0 0 0 4px; border: 1px solid #999; background: #fafafa; }
.flip svg { transform: scaleX(-1); }
.up svg { transform: rotate(90deg); }
.down svg { transform: rotate(-90deg); }
.rot { transform: rotate(180deg); }
.fx { font: italic bold 14px "Liberation Serif", serif; }
.para { font: bold 16px "Liberation Serif", serif; }

.work { flex: 1; min-height: 0; display: flex; font-family: var(--song); }
.rail { width: 25px; flex: none; display: flex; flex-direction: column; padding-top: 9px; border-right: 2px solid #777; overflow: hidden; position: relative; background: #f7f7f7; }
.vt { position: relative; flex: none; width: 22px; margin: 0 0 -10px 2px; padding: 16px 0 20px 6px; background: #666; clip-path: polygon(0 10px, 100% 0, 100% 100%, 0 calc(100% - 10px)); }
.vt::before { content: ""; position: absolute; inset: 1px 0 1px 1px; background: #fff; clip-path: polygon(0 10px, 100% 0, 100% 100%, 0 calc(100% - 10px)); }
.vt span { position: relative; display: block; width: 12px; line-height: 13px; white-space: normal; word-break: break-all; }
.vt.cur { z-index: 9; font-weight: bold; }
.vt.cur::before { background: #f0f0f0; }
.z8 { z-index: 8; } .z6 { z-index: 6; } .z5 { z-index: 5; } .z4 { z-index: 4; } .z3 { z-index: 3; } .z2 { z-index: 2; } .z1 { z-index: 1; }
.railnav { position: absolute; z-index: 10; left: 0; right: 0; bottom: 3px; display: flex; }
.railnav button { flex: 1; height: 11px; border: 1px solid #444; background: #c8c8c8; display: flex; align-items: center; justify-content: center; }
.railnav svg { width: 9px; height: 9px; }
.railnav button:disabled { border-color: #c8c8c8; fill: #888; }

.side { width: 154px; flex: none; padding-left: 4px; display: flex; flex-direction: column; }
.sidehead { height: 27px; flex: none; display: flex; align-items: center; justify-content: center; font-family: var(--ui); position: relative; padding-right: 22px; }
.sidehead button { position: absolute; right: 9px; top: 7px; }
.sidehead svg { width: 12px; height: 12px; display: block; }
.sidetree { flex: 1; border: 1px solid #828790; background: #fff; padding: 1px 2px; }
.root { display: inline-block; background: #d9d9d9; padding: 0 5px 0 3px; line-height: 14px; vertical-align: top; }
.sidetree ul { margin-left: 11px; margin-top: -2px; }
.sidetree li { line-height: 14px; padding-left: 12px; position: relative; }
.sidetree li::before { content: ""; position: absolute; left: 0; top: 0; width: 9px; height: 7px; border: dotted #888; border-width: 0 0 1px 1px; }
.sidetree li:not(:last-child)::after { content: ""; position: absolute; left: 0; top: 7px; height: 7px; border-left: 1px dotted #888; }
.sidetabs { height: 21px; flex: none; position: relative; display: flex; gap: 9px; padding-left: 14px; }
.sidetabs button { position: relative; height: 18px; line-height: 18px; }
.shape { position: absolute; left: 0; top: 0; width: 150px; height: 20px; }
.splitter { width: 8px; flex: none; display: flex; align-items: center; justify-content: center; }
.splitter i { width: 6px; height: 100px; border: 1px solid #888; background: #f6f6f6; }

.right { flex: 1; min-width: 0; display: grid; grid-template-rows: 27px 355fr 30px 217fr; grid-template-columns: 100%; }
.toolbar2 { display: flex; align-items: center; overflow: hidden; width: 1000px; max-width: 100%; background: linear-gradient(#fbfbfb, #ededed); font-family: var(--ui); }
.toolbar2 > .grip { margin-right: 6px; }
.toolbar2 .tb:disabled { color: #8a8a8a; }
.gray { filter: grayscale(1); opacity: .5; }
.gridbox { min-width: 0; min-height: 0; display: flex; flex-direction: column; border: 1px solid #a0a0a0; padding: 1px 1px 2px; background: #fff; overflow: hidden; }
.scrollarea { flex: 1; min-height: 0; display: flex; overflow: hidden; }
.hbar { height: 15px; flex: none; display: flex; align-items: center; background: #f0f0f0; padding: 0 4px; gap: 3px; color: #606060; }
.hbar svg, .vbar svg { width: 10px; height: 10px; }
.thumb { width: 17px; height: 15px; background: #cdcdcd; }
.thumb82 { width: 82px; height: 15px; background: #cdcdcd; }
.space { flex: 1; }
.hbar .end2 { margin-right: 18px; }
.vbar { width: 17px; flex: none; display: flex; flex-direction: column; align-items: center; background: #f0f0f0; padding: 4px 0; gap: 3px; color: #606060; }
.thumb17 { width: 15px; height: 17px; background: #cdcdcd; }

.grid { border-collapse: separate; border-spacing: 0; table-layout: fixed; flex: none; align-self: flex-start; line-height: 12px; font-family: var(--song); }
.upper .grid { flex: 1; width: 100%; }
.grid th, .grid td { border: solid #c0c0c0; border-width: 0 1px 1px 0; padding: 0 2px; overflow: hidden; white-space: nowrap; font-weight: normal; text-align: left; position: relative; }
.grid th { background: #f0f0f0; text-align: center; }
.grid .c { text-align: center; }
.grid .r { text-align: right; }
.upper .grid .r { padding-right: 3px; }
.grid .org { background: #ffd48c; }
.grid .orghead { background: linear-gradient(#fbd99c, #f1bf60); }
.grid .cell { background: #d9ebf9; }
.grid .sec td { background: #e3f3fe; }
.grid .selrow td { background: #a9dcfb; }
.grid .red { background: #a9dcfb; color: #f00; font-weight: bold; }
.grid .blue { color: #00f; font-weight: bold; }
.grid .t1 { padding-left: 29px; } .grid .t2 { padding-left: 39px; } .grid .t3 { padding-left: 49px; }
.grid .code { padding-left: 20px; }
.grid .k { padding-left: 22px; }
.grid .k input { appearance: none; display: block; width: 13px; height: 13px; margin: 0; border: 1px solid #333; background: #fff; }
.ln { position: absolute; left: 0; top: 0; width: 100%; height: 100%; fill: none; stroke: #b4b4b4; }
.ln use { stroke: none; }
.h19 { height: 19px; } .h20 { height: 20px; } .h21 { height: 21px; } .h29 { height: 29px; } .h41 { height: 41px; } .h89 { height: 89px; }
.c21 { width: 21px; } .c22 { width: 23px; } .c34 { width: 34px; } .c38 { width: 38px; } .c39 { width: 39px; } .c41 { width: 41px; } .c49 { width: 49px; } .c55 { width: 55px; } .c57 { width: 57px; } .c60 { width: 60px; } .c62 { width: 62px; } .c65 { width: 65px; } .c75 { width: 75px; } .c81 { width: 81px; } .c98 { width: 98px; } .c109 { width: 109px; } .c125 { width: 125px; } .c127 { width: 127px; } .c268 { width: 268px; }
.low { width: 1080px; }

.midtabs { display: flex; align-items: center; padding: 6px 0 0 2px; }
.midtabs button { height: 20px; padding: 0 10px; border-right: 1px solid #a0a0a0; }
.midtabs button.pressed { padding: 0 5px; margin-right: 5px; }
.pressed { border: 1px solid; border-color: #777 #fff #fff #777 !important; background: #f8f8f8; }
.midtabs button:last-child { border: 0; }
.midtabs button:nth-child(2) { border-left: 1px solid #a0a0a0; }

.lower { display: grid; grid-template-columns: minmax(0, 1fr) 128px; min-height: 0; }
.actions { padding: 6px 6px 0 7px; }
.btns { display: grid; grid-template-columns: 46px 48px; gap: 5px 6px; padding-left: 6px; }
.btns button, .dbtns button { height: 23px; border: 1px solid #adadad; background: #e1e1e1; }
.wide { grid-column: span 2; }
fieldset { margin: 4px 0 0; padding: 8px 0 9px; border: 1px solid #dcdcdc; min-width: 0; display: grid; grid-template-columns: 67px 1fr; row-gap: 7px; }
legend { padding: 0; margin-left: 7px; }
label { display: flex; align-items: center; gap: 2px; white-space: nowrap; }
label input[type="radio"] { appearance: none; width: 13px; height: 13px; margin: 0; border: 1px solid #444; border-radius: 50%; background: #fff; }
label input[type="radio"]:checked { background: radial-gradient(circle, #222 0 3px, #fff 4px); }

.status { height: 22px; flex: none; display: flex; gap: 3px; padding-top: 1px; font-family: var(--song); }
.status span { border: 1px solid #d4d4d4; background: linear-gradient(#fafafa, #eee); line-height: 18px; padding: 0 1px; white-space: nowrap; overflow: hidden; }
.s1 { flex: 372 1 0; } .s3 { flex: 224 1 0; } .s4 { flex: 200 1 0; } .s5 { flex: 188 1 0; }

.taskbar { height: 40px; flex: none; display: flex; background: #000a0d; color: #fff; }
.start { width: 48px; background: #000; }
.start svg { width: 16px; height: 16px; display: block; margin: auto; }
.search { width: 344px; background: #333; display: flex; align-items: center; padding: 0 15px 0 9px; }
.ring { width: 22px; height: 22px; border: 3px solid #fff; border-radius: 50%; margin-right: 5px; }
.search input { flex: 1; min-width: 0; border: 0; background: none; padding: 0; font-size: 14px; }
.search input::placeholder { color: #919191; }
.mic { width: 12px; height: 18px; fill: none; stroke: #919191; }
.tk { width: 50px; flex: none; display: flex; align-items: center; justify-content: center; }
.tk svg { width: 24px; height: 24px; }
.tk .big { width: 30px; height: 26px; }
.run { border-bottom: 2px solid #76b9ed; width: 47px; margin-left: 2px; padding-top: 2px; }
.active { background: #3a4548; }
.tray { flex: 1; display: flex; align-items: center; justify-content: flex-end; padding-right: 24px; gap: 6px; }
.tray svg { fill: none; stroke: #fff; }
.t16 { width: 16px; height: 16px; } .t20 { width: 18px; height: 16px; } .t28 { width: 24px; height: 14px; }
.cpu, .clock { text-align: center; font-family: "Noto Sans", "Noto Sans CJK SC", sans-serif; }
.cpu { margin-right: 12px; }
.ime { font-size: 14px; margin: 0 4px; }
.tray .sg { width: 16px; height: 16px; stroke: none; margin: 0 6px; }
.note { width: 18px; height: 18px; margin-left: 10px; }

.dialog { position: absolute; z-index: 20; left: 420px; right: 93px; top: 90px; bottom: 164px; border: 1px solid #3a93e4; background: #f0f0f0; box-shadow: 0 4px 16px rgba(0, 0, 0, .45); display: flex; flex-direction: column; font-family: var(--song); overflow: hidden; }
.dtitle { height: 30px; flex: none; display: flex; align-items: center; gap: 5px; padding-left: 8px; background: #fff; font-family: var(--ui); }
.dtabs { height: 27px; flex: none; display: flex; }
.dtabs > button { height: 21px; padding: 0 11px; border-right: 1px solid #a0a0a0; }
.dtabs > button:first-child { padding-left: 7px; }
.dtabs > button:nth-child(2) { padding-right: 17px; }
.dtabs > button.pressed { padding: 0 6px; margin: 0 4px; width: 42px; }
.dtabs > button:nth-child(4) { border-left: 1px solid #a0a0a0; }
.dbtns { margin: 3px -3px 0 auto; display: flex; gap: 4px; }
.dbtns button { width: 73px; height: 24px; font-family: var(--ui); }
.dbody { flex: 1; min-height: 0; display: flex; }
.dleft { width: 219px; flex: none; display: flex; flex-direction: column; }
.dleft select { width: 216px; height: 20px; flex: none; appearance: none; border: 1px solid #adadad; border-radius: 0; padding: 0 18px 0 3px; background: linear-gradient(45deg, transparent 45%, #555 45% 55%, transparent 55%) right 9px center / 5px 5px no-repeat, linear-gradient(-45deg, transparent 45%, #555 45% 55%, transparent 55%) right 5px center / 5px 5px no-repeat, #e1e1e1; }
.subtabs { height: 22px; flex: none; display: flex; align-items: flex-end; padding-left: 2px; }
.subtabs button { height: 18px; width: 57px; border: 1px solid #dcdcdc; border-bottom: 0; }
.subtabs .cur { height: 20px; width: 62px; background: #fff; }
.page { flex: 1; min-height: 0; display: flex; flex-direction: column; border: 1px solid #dcdcdc; margin: 0 4px 2px 1px; padding: 3px 2px 2px 2px; }
.dtree { height: 368px; border: 1px solid #828790; background: #fff; display: flex; flex-direction: column; }
.dview { flex: 1; min-height: 0; display: flex; position: relative; overflow: hidden; }
.dview ul { flex: 1; min-width: 0; overflow: hidden; padding-top: 1px; }
.dview li { height: 16px; display: flex; align-items: center; gap: 6px; white-space: nowrap; }
.dview li svg { width: 10px; height: 10px; margin: 0 1px; color: #a0a0a0; }
.dview li.o svg { color: #404040; }
.dview li i { width: 12px; }
.l0 { padding-left: 6px; } .l1 { padding-left: 25px; } .l2 { padding-left: 45px; } .l3 { padding-left: 78px; }
.l3 span { padding-left: 3px; }
.l3 .hl { background: #cde8ff; }
.dots { position: absolute; left: 0; top: 0; width: 189px; height: 348px; }
.dthumb { width: 15px; height: 264px; background: #cdcdcd; }
.dradios { flex: 1; display: flex; align-items: center; gap: 21px; padding-left: 11px; }
.dradios label { gap: 8px; }
.dradios input[type="radio"] { width: 11px; height: 11px; border-color: #888; }
.dradios input[type="radio"]:checked { background: radial-gradient(circle, #000 0 2px, #fff 3px); }
.dright { flex: 1; min-width: 0; background: #fff; border: 1px solid #a0a0a0; border-width: 1px 0 1px 1px; padding: 1px; overflow: hidden; }
.dg { width: 554px; }

.marks { position: absolute; z-index: 30; left: 350px; top: 100px; width: 700px; height: 450px; pointer-events: none; }
.ball { position: absolute; z-index: 31; left: 830px; top: 3px; width: 210px; height: 56px; font-family: var(--ui); }
```
